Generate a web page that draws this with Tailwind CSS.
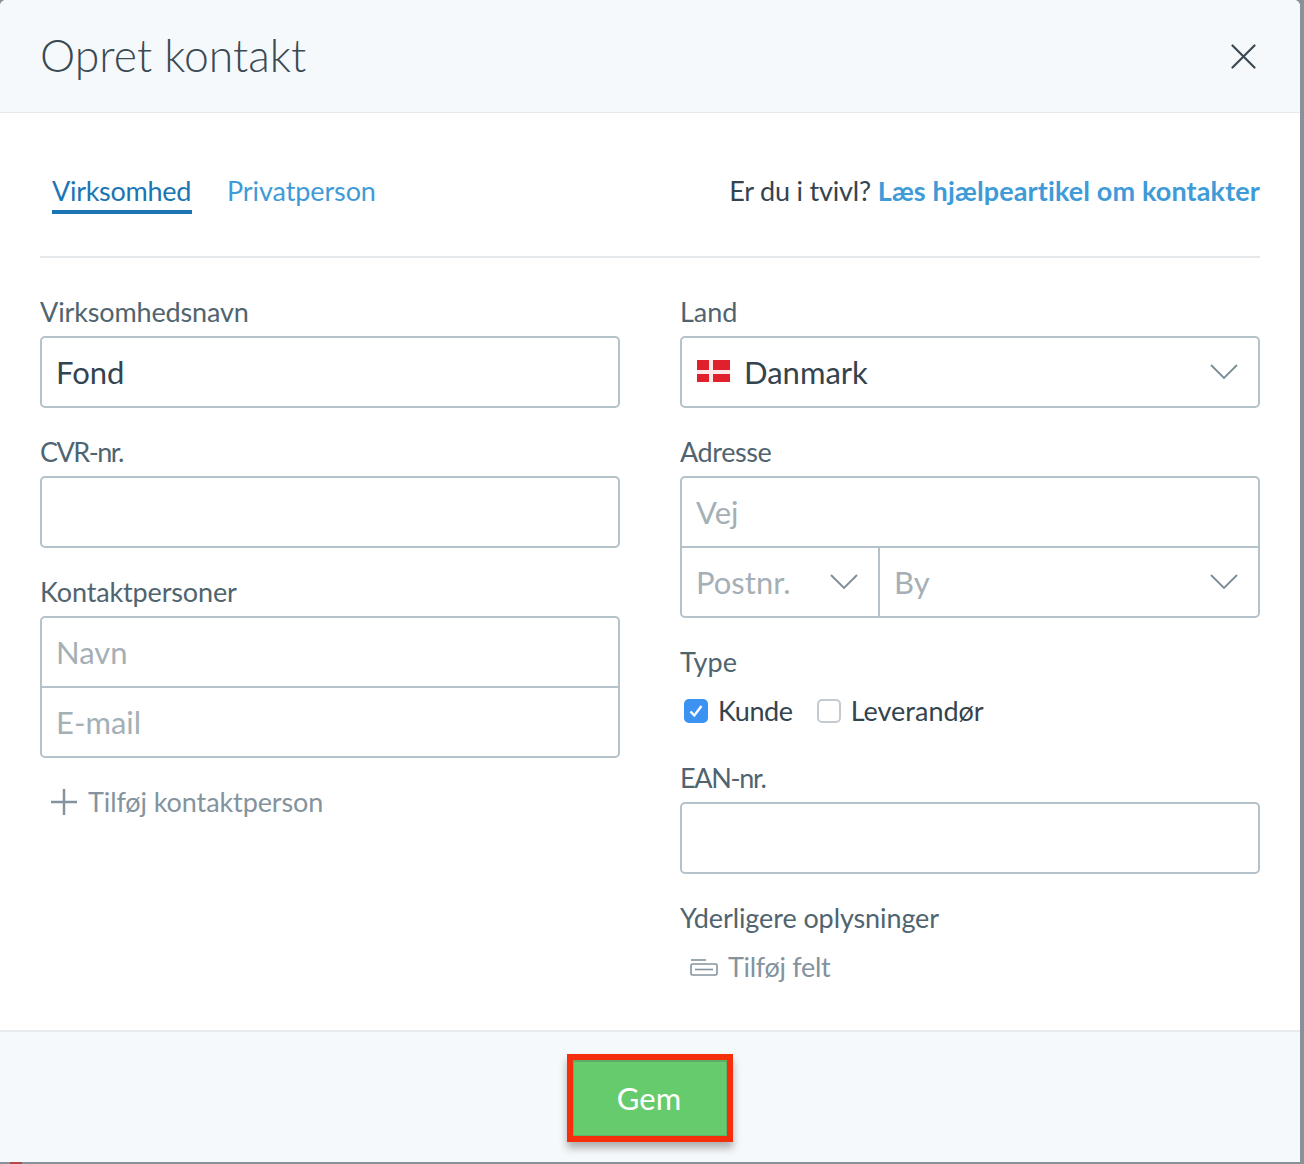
<!DOCTYPE html>
<html>
<head>
    <meta charset="UTF-8">
    <script src="https://cdn.jsdelivr.net/npm/@tailwindcss/browser@4"></script>
</head>
<body class="bg-[#8a9196] font-['Lato',sans-serif] text-[#34444f]">
    <div class="w-[1300px] h-[1162px] bg-white rounded-t-[6px] flex flex-col overflow-hidden">
        <!-- header -->
        <div class="h-[113px] shrink-0 bg-[#f6f9fb] border-b border-[#e6e9eb] flex items-center justify-between pl-10 pr-[44px]">
            <h1 class="text-[44.5px] font-light text-[#3a4a54] leading-[56px] -mt-[2px]">Opret kontakt</h1>
            <svg class="w-[25px] h-[25px]" viewBox="0 0 25 25" fill="none" stroke="#3a4a54" stroke-width="2.2" stroke-linecap="round"><path d="M1.5 1.5l22 22M23.5 1.5l-22 22"/></svg>
        </div>

        <div class="flex-1 px-10">
            <!-- tabs -->
            <div class="h-[145px] border-b-2 border-[#e5e8ea] flex justify-between items-start pt-[60px]">
                <div class="flex gap-[35px] pl-3 text-[27px] leading-[36px]">
                    <div class="text-[#1b75b5] border-b-4 border-[#1b75b5] h-[41px] w-[140px] tracking-[-0.3px]">Virksomhed</div>
                    <div class="text-[#3f9bd8] tracking-[-0.1px]">Privatperson</div>
                </div>
                <div class="text-[27px] leading-[36px]"><span class="tracking-[-0.2px]">Er du i tvivl?</span> <a class="text-[#3f9bd8] font-bold tracking-[0.13px]">Læs hjælpeartikel om kontakter</a></div>
            </div>

            <!-- form -->
            <div class="grid grid-cols-2 gap-x-[60px] pt-[41px]">
                <div>
                    <div class="h-7 mb-[9px] text-[27px] leading-[26px] text-[#50646f] tracking-[-0.14px]">Virksomhedsnavn</div>
                    <input value="Fond" class="w-full h-[72px] border-2 border-[#b6c2c9] rounded-[5px] px-[14px] text-[31px] text-[#34444f] mb-[31px]">

                    <div class="h-7 mb-[9px] text-[27px] leading-[26px] text-[#50646f] tracking-[-1.5px]">CVR-nr.</div>
                    <input class="w-full h-[72px] border-2 border-[#b6c2c9] rounded-[5px] px-[14px] text-[31px] mb-[31px]">

                    <div class="h-7 mb-[9px] text-[27px] leading-[26px] text-[#50646f] tracking-[-0.14px]">Kontaktpersoner</div>
                    <div class="border-2 border-[#b6c2c9] rounded-[5px] divide-y-2 divide-[#b6c2c9]">
                        <input placeholder="Navn" class="block w-full h-[70px] px-[14px] text-[31px] placeholder:text-[#a5afb6]">
                        <input placeholder="E-mail" class="block w-full h-[68px] px-[14px] text-[31px] placeholder:text-[#a5afb6]">
                    </div>
                    <div class="flex items-center gap-[11px] pl-[11px] mt-[29px] h-[30px] text-[27px] text-[#84939d] tracking-[-0.1px]">
                        <svg class="w-[26px] h-[26px]" viewBox="0 0 26 26" fill="none" stroke="#84939d" stroke-width="2.5"><path d="M13 0v26M0 13h26"/></svg>
                        <span>Tilføj kontaktperson</span>
                    </div>
                </div>

                <div>
                    <div class="h-7 mb-[9px] text-[27px] leading-[26px] text-[#50646f]">Land</div>
                    <div class="h-[72px] border-2 border-[#b6c2c9] rounded-[5px] pl-[15px] pr-5 flex items-center mb-[31px]">
                        <svg class="w-[33px] h-[22px] mr-[14px] -mt-[2px]" viewBox="0 0 33 22"><rect width="33" height="22" fill="#e0202c"/><rect x="12" width="4" height="22" fill="#fbeaea"/><rect y="10" width="33" height="4" fill="#fbeaea"/></svg>
                        <span class="text-[31px] flex-1">Danmark</span>
                        <svg class="w-[28px] h-[16px]" viewBox="0 0 28 16" fill="none" stroke="#7c8c96" stroke-width="1.8"><path d="M1 1l13 13L27 1"/></svg>
                    </div>

                    <div class="h-7 mb-[9px] text-[27px] leading-[26px] text-[#50646f] tracking-[-0.4px]">Adresse</div>
                    <div class="border-2 border-[#b6c2c9] rounded-[5px] h-[142px] flex flex-col mb-[31px]">
                        <input placeholder="Vej" class="block w-full h-[70px] shrink-0 px-[14px] text-[31px] border-b-2 border-[#b6c2c9] placeholder:text-[#a5afb6]">
                        <div class="flex flex-1">
                            <div class="w-[198px] border-r-2 border-[#b6c2c9] pl-[14px] pr-[20px] flex items-center justify-between text-[31px] text-[#a5afb6]">
                                <span>Postnr.</span>
                                <svg class="w-[28px] h-[16px]" viewBox="0 0 28 16" fill="none" stroke="#7c8c96" stroke-width="1.8"><path d="M1 1l13 13L27 1"/></svg>
                            </div>
                            <div class="flex-1 pl-[14px] pr-[20px] flex items-center justify-between text-[31px] text-[#a5afb6]">
                                <span>By</span>
                                <svg class="w-[28px] h-[16px]" viewBox="0 0 28 16" fill="none" stroke="#7c8c96" stroke-width="1.8"><path d="M1 1l13 13L27 1"/></svg>
                            </div>
                        </div>
                    </div>

                    <div class="h-7 mb-[21px] text-[27px] leading-[26px] text-[#50646f]">Type</div>
                    <div class="flex items-center h-[26px] pl-1 text-[27px] mb-[41px]">
                        <span class="w-6 h-6 rounded-[5px] bg-[#3b92f0] flex items-center justify-center mr-[10px]">
                            <svg class="w-4 h-4" viewBox="0 0 16 16" fill="none" stroke="#fff" stroke-width="2.4"><path d="M2.5 8.5l3.8 4L13.5 3"/></svg>
                        </span>
                        <span class="tracking-[-0.4px]">Kunde</span>
                        <span class="w-6 h-6 rounded-[5px] border-2 border-[#c4cbd0] ml-[24px] mr-[10px]"></span>
                        <span>Leverandør</span>
                    </div>

                    <div class="h-7 mb-[9px] text-[27px] leading-[26px] text-[#50646f] tracking-[-1.3px]">EAN-nr.</div>
                    <input class="w-full h-[72px] border-2 border-[#b6c2c9] rounded-[5px] px-[14px] text-[31px] mb-[31px]">

                    <div class="h-7 mb-[20px] text-[27px] leading-[26px] text-[#50646f] tracking-[-0.1px]">Yderligere oplysninger</div>
                    <div class="flex items-center gap-[10px] pl-[10px] h-[28px] text-[27px] text-[#84939d] tracking-[-0.3px]">
                        <svg class="w-[28px] h-[17px]" viewBox="0 0 28 17" fill="none" stroke="#84939d" stroke-width="1.6"><path d="M1 1h15"/><rect x="1" y="5" width="26" height="11" rx="1.5"/><path d="M5 10.5h18"/></svg>
                        <span>Tilføj felt</span>
                    </div>
                </div>
            </div>
        </div>

        <!-- footer -->
        <div class="h-[132px] shrink-0 bg-[#f6f9fb] border-t-2 border-[#e8ebed] flex justify-center pt-[22px]">
            <button class="w-[166px] h-[88px] border-[6px] border-[#f52f0b] bg-[#66cb6c] text-white text-[31px] pr-[2px] shadow-[inset_0_2px_0_#5bae63,inset_0_0_0_1px_#5fb368,0_6px_8px_rgba(0,0,0,0.3)]">Gem</button>
        </div>
    </div>
    <div class="h-[2px] pl-[10px]"><div class="w-[12px] h-[2px] bg-[#b5474f]"></div></div>
</body>
</html>
